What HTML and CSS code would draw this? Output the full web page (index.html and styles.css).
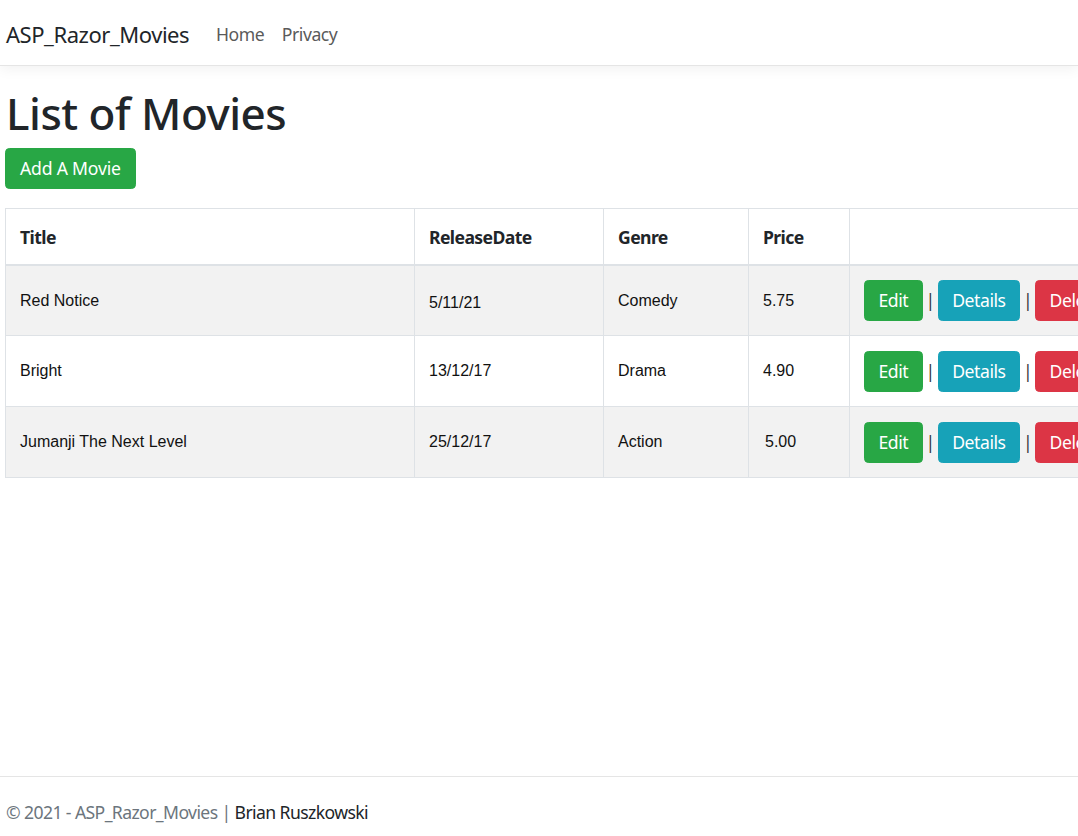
FILE: index.html
```html
<!DOCTYPE html>
<html lang="en">
<head>
<meta charset="utf-8">
<title>List of Movies - ASP_Razor_Movies</title>
<link rel="stylesheet" href="styles.css">
</head>
<body>
<div class="page">
  <header class="navbar">
    <a class="brand" href="#">ASP_Razor_Movies</a>
    <nav class="nav">
      <a class="nav-link" href="#">Home</a>
      <a class="nav-link" href="#">Privacy</a>
    </nav>
  </header>

  <main class="main">
    <h1 class="title">List of Movies</h1>
    <p class="actions-top"><a class="btn btn-success btn-add" href="#">Add A Movie</a></p>

    <table class="table">
      <colgroup>
        <col class="c-title">
        <col class="c-date">
        <col class="c-genre">
        <col class="c-price">
        <col class="c-act">
      </colgroup>
      <thead>
        <tr>
          <th>Title</th>
          <th>ReleaseDate</th>
          <th>Genre</th>
          <th>Price</th>
          <th></th>
        </tr>
      </thead>
      <tbody>
        <tr class="odd">
          <td>Red Notice</td>
          <td class="low">5/11/21</td>
          <td>Comedy</td>
          <td>5.75</td>
          <td class="act"><a class="btn btn-success" href="#">Edit</a><span class="sep">|</span><a class="btn btn-info" href="#">Details</a><span class="sep">|</span><a class="btn btn-danger" href="#">Delete</a></td>
        </tr>
        <tr>
          <td>Bright</td>
          <td>13/12/17</td>
          <td>Drama</td>
          <td>4.90</td>
          <td class="act"><a class="btn btn-success" href="#">Edit</a><span class="sep">|</span><a class="btn btn-info" href="#">Details</a><span class="sep">|</span><a class="btn btn-danger" href="#">Delete</a></td>
        </tr>
        <tr class="odd">
          <td>Jumanji The Next Level</td>
          <td>25/12/17</td>
          <td>Action</td>
          <td class="shift">5.00</td>
          <td class="act"><a class="btn btn-success" href="#">Edit</a><span class="sep">|</span><a class="btn btn-info" href="#">Details</a><span class="sep">|</span><a class="btn btn-danger" href="#">Delete</a></td>
        </tr>
      </tbody>
    </table>
  </main>

  <footer class="footer">
    © 2021 - ASP_Razor_Movies <span class="bar">|</span> <span class="author">Brian Ruszkowski</span>
  </footer>
</div>
</body>
</html>
```

FILE: styles.css
```css
* { box-sizing: border-box; }

html, body {
  margin: 0;
  padding: 0;
}

body {
  font-family: "Noto Sans", "Open Sans", sans-serif;
  font-size: 17.6px;
  line-height: 1.5;
  letter-spacing: -0.45px;
  color: #212529;
  background: #fff;
  overflow: hidden;
}

.page {
  min-height: 836px;
  display: flex;
  flex-direction: column;
}

a { text-decoration: none; }

.navbar {
  height: 66px;
  display: flex;
  align-items: center;
  padding: 4px 5px 0;
  border-bottom: 1px solid #e5e5e5;
  box-shadow: 0 4px 12px rgba(0, 0, 0, 0.05);
}

.brand {
  font-size: 22px;
  color: #212529;
  margin-right: 18px;
  margin-left: 1px;
}

.nav {
  display: flex;
}

.nav-link {
  color: #5a5a5a;
  padding: 0 8.8px;
  font-size: 17.6px;
}

.main {
  flex: 1;
  padding: 0 5px;
}

.title {
  font-size: 44px;
  font-weight: 500;
  line-height: 1.2;
  letter-spacing: -0.5px;
  margin: 21px 0 8px 1px;
}

.actions-top {
  margin: 0 0 19px 0;
}

.btn {
  display: inline-block;
  font-size: 17.6px;
  line-height: 1.5;
  padding: 6.6px 13.5px;
  border-radius: 4.4px;
  color: #fff;
  vertical-align: middle;
  border: 1px solid transparent;
}

.btn-add {
  padding-left: 14px;
  padding-right: 14px;
  letter-spacing: -0.2px;
}

.btn-success { background: #28a745; border-color: #28a745; }
.btn-info { background: #17a2b8; border-color: #17a2b8; }
.btn-danger { background: #dc3545; border-color: #dc3545; }

.table {
  border-collapse: collapse;
  table-layout: fixed;
  width: 1130px;
}

.c-title { width: 409px; }
.c-date { width: 189px; }
.c-genre { width: 145px; }
.c-price { width: 101px; }

.table th,
.table td {
  border: 1px solid #dee2e6;
  padding: 0 14px;
  text-align: left;
  vertical-align: middle;
}

.table th {
  height: 56px;
  font-weight: 700;
  font-size: 17.6px;
  letter-spacing: -0.6px;
  border-bottom: 2px solid #dee2e6;
  padding-top: 2px;
}

.table td {
  height: 71px;
  font-family: "Liberation Sans", Arial, sans-serif;
  font-size: 16px;
  letter-spacing: normal;
  color: #111;
}

.table tbody tr.odd td {
  background: #f2f2f2;
}

.table td.low { padding-top: 4px; }
.table td.shift { padding-left: 16px; }

.table td.act {
  font-family: "Noto Sans", "Open Sans", sans-serif;
  letter-spacing: -0.45px;
  white-space: nowrap;
}

.sep {
  display: inline-block;
  width: 15px;
  text-align: center;
  color: #343a40;
  font-size: 17.6px;
  vertical-align: middle;
}

.footer {
  height: 60px;
  border-top: 1px solid #e5e5e5;
  padding: 22px 5px 0 6px;
  line-height: 26px;
  color: #6c757d;
  font-size: 17.6px;
  letter-spacing: -0.6px;
  white-space: nowrap;
}

.footer .author { color: #212529; }
```
